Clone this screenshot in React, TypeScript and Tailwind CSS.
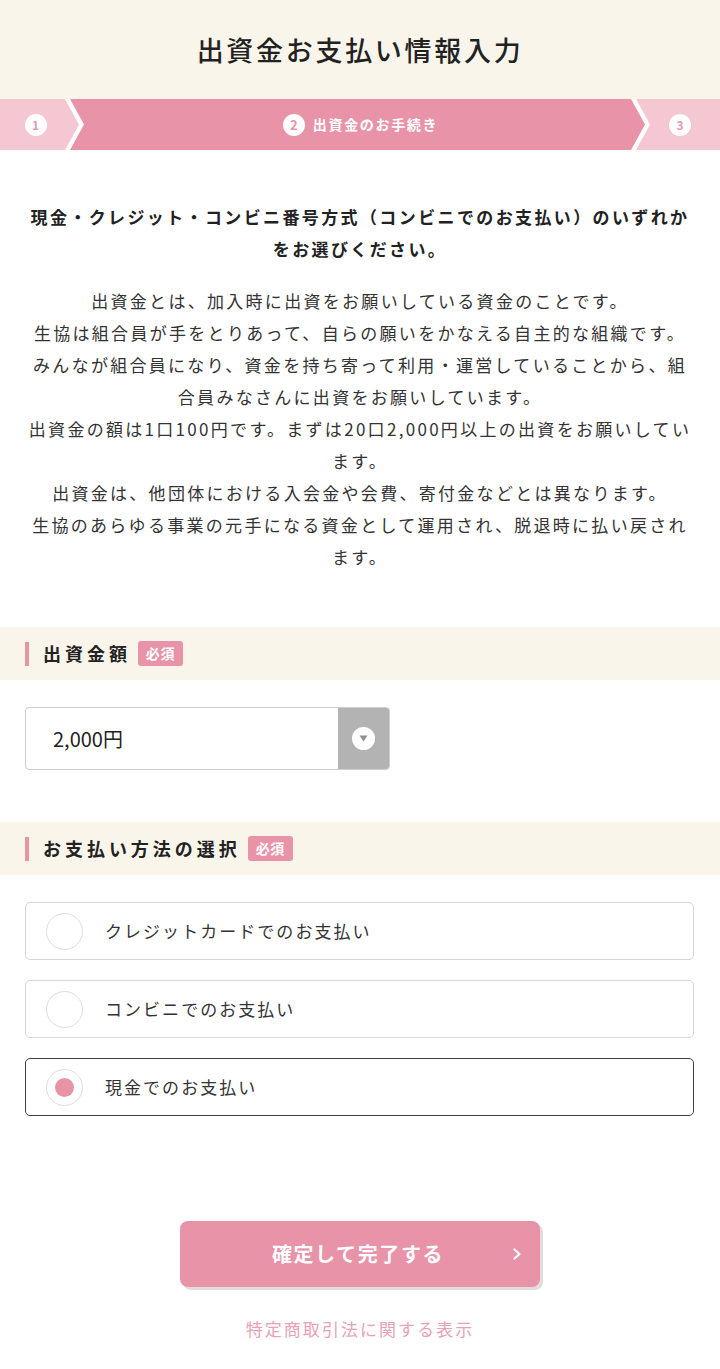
import React from "react";

const font = "font-['Noto_Sans_CJK_JP','Noto_Sans',sans-serif]";

const intro = [
  "出資金とは、加入時に出資をお願いしている資金のことです。",
  "生協は組合員が手をとりあって、自らの願いをかなえる自主的な組織です。",
  "みんなが組合員になり、資金を持ち寄って利用・運営していることから、組",
  "合員みなさんに出資をお願いしています。",
  "出資金の額は1口100円です。まずは20口2,000円以上の出資をお願いしてい",
  "ます。",
  "出資金は、他団体における入会金や会費、寄付金などとは異なります。",
  "生協のあらゆる事業の元手になる資金として運用され、脱退時に払い戻され",
  "ます。",
];

const methods = [
  { label: "クレジットカードでのお支払い", checked: false },
  { label: "コンビニでのお支払い", checked: false },
  { label: "現金でのお支払い", checked: true },
];

function SectionTitle({ title }: { title: string }) {
  return (
    <div className="flex items-center h-[53px] bg-[#faf5eb] pl-[25px]">
      <span className="block w-[4px] h-[24px] bg-[#e993a9]" />
      <span className="ml-[14px] text-[18px] font-bold tracking-[0.22em] text-[#222]">
        {title}
      </span>
      <span className="ml-[7px] h-[25px] px-[8px] flex items-center rounded-[3px] bg-[#e993a9] text-white text-[14px] font-bold tracking-[0.05em]">
        必須
      </span>
    </div>
  );
}

export default function App() {
  return (
    <div className={`w-[720px] min-h-[1369px] bg-white ${font}`}>
      {/* Header */}
      <header className="h-[99px] bg-[#faf5eb] flex items-center justify-center">
        <h1 className="text-[27px] font-medium tracking-[0.1em] text-[#222] pt-[1px]">
          出資金お支払い情報入力
        </h1>
      </header>

      {/* Stepper */}
      <div className="flex h-[51px] bg-[#f5c7d2]">
        <div className="w-[65px] flex items-center justify-center pl-[6px]">
          <span className="w-[22px] h-[22px] rounded-full bg-white flex items-center justify-center text-[12px] font-bold text-[#e39aae]">
            1
          </span>
        </div>
        <div className="w-[585px] bg-white [clip-path:polygon(0_0,calc(100%-14px)_0,100%_50%,calc(100%-14px)_100%,0_100%,14px_50%)] px-[5px]">
          <div className="h-full bg-[#e993a9] [clip-path:polygon(0_0,calc(100%-14px)_0,100%_50%,calc(100%-14px)_100%,0_100%,14px_50%)] flex items-center justify-center gap-[8px] pl-[6px]">
            <span className="w-[22px] h-[22px] rounded-full bg-white flex items-center justify-center text-[13px] font-bold text-[#e993a9]">
              2
            </span>
            <span className="text-[14px] font-bold text-white tracking-[0.12em]">出資金のお手続き</span>
          </div>
        </div>
        <div className="flex-1 flex items-center justify-center pr-[10px]">
          <span className="w-[22px] h-[22px] rounded-full bg-white flex items-center justify-center text-[12px] font-bold text-[#e39aae]">
            3
          </span>
        </div>
      </div>

      {/* Intro */}
      <div className="px-[20px] pt-[51px] text-center text-[#222]">
        <p className="text-[17px] leading-[32px] font-bold tracking-[0.14em] whitespace-nowrap">
          <span className="block">現金・クレジット・コンビニ番号方式（コンビニでのお支払い）のいずれか</span>
          <span className="block">をお選びください。</span>
        </p>
        <p className="mt-[20px] text-[17px] leading-[32px] tracking-[0.135em] text-[#333] whitespace-nowrap">
          {intro.map((l, i) => (
            <span key={i} className="block">
              {l}
            </span>
          ))}
        </p>
      </div>

      {/* Amount */}
      <div className="mt-[54px]">
        <SectionTitle title="出資金額" />
        <div className="px-[25px] pt-[27px]">
          <div className="w-[365px] h-[63px] flex rounded-[4px] border border-[#cfcfcf] overflow-hidden">
            <div className="flex-1 flex items-center pl-[27px] text-[20px] text-[#222]">2,000円</div>
            <div className="w-[51px] bg-[#b3b3b3] flex items-center justify-center">
              <span className="w-[23px] h-[23px] rounded-full bg-white flex items-center justify-center">
                <svg width="9" height="7" viewBox="0 0 9 7">
                  <path d="M0.5 0.5h8L4.5 6.5z" fill="#8f8f8f" />
                </svg>
              </span>
            </div>
          </div>
        </div>
      </div>

      {/* Payment method */}
      <div className="mt-[52px]">
        <SectionTitle title="お支払い方法の選択" />
        <div className="px-[25px] pt-[27px] pr-[26px] flex flex-col gap-[20px]">
          {methods.map((m) => (
            <label
              key={m.label}
              className={`h-[58px] flex items-center pl-[20px] rounded-[5px] bg-white ${
                m.checked ? "border-[1.5px] border-[#3f3f3f]" : "border border-[#d6d6d6]"
              }`}
            >
              <span className="w-[37px] h-[37px] rounded-full border-[1.5px] border-[#dedede] bg-white flex items-center justify-center">
                {m.checked && <span className="w-[19px] h-[19px] rounded-full bg-[#e993a9]" />}
              </span>
              <span className="ml-[22px] text-[17px] tracking-[0.12em] text-[#333]">{m.label}</span>
            </label>
          ))}
        </div>
      </div>

      {/* Submit */}
      <div className="mt-[105px] flex flex-col items-center">
        <button className="relative w-[360px] h-[66px] rounded-[8px] bg-[#e993a9] shadow-[3px_3px_0_#e2dcdc] flex items-center justify-center">
          <span className="text-[20px] font-bold tracking-[0.08em] text-white pr-[4px]">確定して完了する</span>
          <svg className="absolute right-[18px] top-1/2 -translate-y-1/2" width="9" height="12" viewBox="0 0 9 12">
            <path d="M1.5 1.5l5 4.5-5 4.5" fill="none" stroke="#fff" strokeWidth="2.2" strokeLinecap="round" strokeLinejoin="round" />
          </svg>
        </button>
        <a className="mt-[30px] text-[17px] leading-[24px] tracking-[0.12em] text-[#e9a2b5]">
          特定商取引法に関する表示
        </a>
      </div>
    </div>
  );
}
